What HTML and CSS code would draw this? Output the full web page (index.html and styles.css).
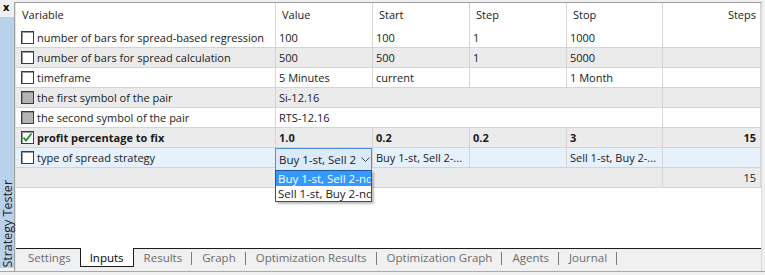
FILE: index.html
```html
<!DOCTYPE html>
<html lang="en">
<head>
  <meta charset="UTF-8" />
  <meta name="viewport" content="width=device-width, initial-scale=1.0" />
  <title>Strategy Tester - Inputs</title>
  <link rel="stylesheet" href="styles.css">
</head>
<body>
  <div class="window">
    <div class="frame">
      <!-- docked panel caption, reads bottom to top -->
      <div class="side">
        <span class="close">x</span>
        <div class="caption"><span>Strategy Tester</span></div>
      </div>

      <div class="panel">
        <!-- inputs table -->
        <div class="grid">
          <div class="row head">
            <div class="cell">Variable</div>
            <div class="cell">Value</div>
            <div class="cell">Start</div>
            <div class="cell">Step</div>
            <div class="cell">Stop</div>
            <div class="cell right">Steps</div>
          </div>

          <div class="row">
            <div class="cell name"><span class="check"></span>number of bars for spread-based regression</div>
            <div class="cell">100</div>
            <div class="cell">100</div>
            <div class="cell">1</div>
            <div class="cell">1000</div>
            <div class="cell right"></div>
          </div>

          <div class="row alt">
            <div class="cell name"><span class="check"></span>number of bars for spread calculation</div>
            <div class="cell">500</div>
            <div class="cell">500</div>
            <div class="cell">1</div>
            <div class="cell">5000</div>
            <div class="cell right"></div>
          </div>

          <div class="row">
            <div class="cell name"><span class="check"></span>timeframe</div>
            <div class="cell">5 Minutes</div>
            <div class="cell">current</div>
            <div class="cell"></div>
            <div class="cell">1 Month</div>
            <div class="cell right"></div>
          </div>

          <div class="row alt">
            <div class="cell name"><span class="check off"></span>the first symbol of the pair</div>
            <div class="cell wide">Si-12.16</div>
            <div class="cell right"></div>
          </div>

          <div class="row">
            <div class="cell name"><span class="check off"></span>the second symbol of the pair</div>
            <div class="cell wide">RTS-12.16</div>
            <div class="cell right"></div>
          </div>

          <div class="row alt bold">
            <div class="cell name">
              <span class="check">
                <svg width="11" height="11" viewBox="0 0 11 11"><polyline points="1.5,5.5 4,8.5 9.5,1.5" fill="none" stroke="#189a18" stroke-width="1.8"/></svg>
              </span>profit percentage to fix
            </div>
            <div class="cell">1.0</div>
            <div class="cell">0.2</div>
            <div class="cell">0.2</div>
            <div class="cell">3</div>
            <div class="cell right">15</div>
          </div>

          <div class="row selected">
            <div class="cell name"><span class="check"></span>type of spread strategy</div>
            <div class="cell open">
              <!-- combo box in edit mode, list dropped down -->
              <div class="combo">
                <span>Buy 1-st, Sell 2-nd</span>
                <svg width="9" height="6" viewBox="0 0 9 6"><polyline points="0.5,0.5 4.5,4.5 8.5,0.5" fill="none" stroke="#444" stroke-width="1"/></svg>
              </div>
              <ul class="dropdown">
                <li class="active">Buy 1-st, Sell 2-nd</li>
                <li>Sell 1-st, Buy 2-nd</li>
              </ul>
            </div>
            <div class="cell">Buy 1-st, Sell 2-...</div>
            <div class="cell"></div>
            <div class="cell">Sell 1-st, Buy 2-...</div>
            <div class="cell right"></div>
          </div>

          <div class="row alt">
            <div class="cell name"></div>
            <div class="cell wide"></div>
            <div class="cell right">15</div>
          </div>
        </div>

        <!-- bottom tabs -->
        <div class="tabs">
          <span class="tab first">Settings</span>
          <span class="tab current">Inputs</span>
          <span class="tab">Results</span><span class="sep"></span>
          <span class="tab">Graph</span><span class="sep"></span>
          <span class="tab">Optimization Results</span><span class="sep"></span>
          <span class="tab">Optimization Graph</span><span class="sep"></span>
          <span class="tab">Agents</span><span class="sep"></span>
          <span class="tab">Journal</span><span class="sep"></span>
        </div>
      </div>
    </div>
    <div class="bottom"></div>
  </div>
</body>
</html>
```

FILE: styles.css
```css
body {
  margin: 0;
  background-color: #f0f0f0;
  font-family: 'Open Sans', 'Liberation Sans', sans-serif;
  font-size: 11px;
  color: #1a1a1a;
}

.window {
  width: 765px;
  height: 275px;
  display: flex;
  flex-direction: column;
}

.frame {
  height: 271px;
  display: flex;
}

.bottom {
  flex: 1;
  border-top: 1px solid #a9a9a9;
}

/* side caption */
.side {
  width: 14px;
  display: flex;
  flex-direction: column;
}

.close {
  height: 17px;
  padding-left: 3px;
  font-weight: bold;
  font-size: 11px;
  line-height: 14px;
  color: #000;
}

.caption {
  flex: 1;
  margin-bottom: 3px;
  background-color: #b9d1ea;
  display: flex;
  align-items: flex-end;
  justify-content: center;
}

.caption span {
  writing-mode: vertical-rl;
  transform: rotate(180deg);
  line-height: 13px;
  font-size: 12.5px;
  color: #222;
}

/* panel */
.panel {
  flex: 1;
  margin-top: 2px;
  margin-right: 3px;
  border-top: 1px solid #a0a0a0;
  border-left: 1px solid #a0a0a0;
  border-right: 1px solid #dcdcdc;
  padding-left: 1px;
  background-color: #e4e4e4;
  display: flex;
  flex-direction: column;
}

.grid {
  flex: 1;
  background-color: #fff;
}

.row {
  display: grid;
  grid-template-columns: 260px 97px 97px 97px 96px 98px;
  height: 20px;
  border-bottom: 1px solid #d4d4d4;
  box-sizing: border-box;
}

.row.head {
  height: 25px;
  border-bottom: none;
}

.row.alt {
  background-color: #ebebeb;
}

.row.selected {
  background-color: #e6f1fc;
}

.row.bold {
  font-weight: bold;
}

.cell {
  border-right: 1px solid #d4d4d4;
  padding: 0 4px 0 3px;
  line-height: 19px;
  white-space: nowrap;
  overflow: hidden;
}

.head .cell {
  line-height: 24px;
  padding-left: 6px;
}

.cell.right {
  text-align: right;
}

.cell.wide {
  grid-column: span 4;
}

.cell.name {
  display: flex;
  align-items: center;
  padding-left: 5px;
}

/* checkboxes */
.check {
  width: 13px;
  height: 13px;
  box-sizing: border-box;
  border: 1px solid #3c3c3c;
  box-shadow: inset 1px 1px 0 #9a9a9a;
  background-color: #fff;
  margin-right: 3px;
  flex-shrink: 0;
  display: flex;
  align-items: center;
  justify-content: center;
}

.check.off {
  background-color: #b4b4b4;
  box-shadow: inset 1px 1px 0 #8a8a8a;
}

.check svg {
  display: block;
}

/* combo box */
.cell.open {
  position: relative;
  overflow: visible;
  z-index: 2;
}

.combo {
  position: absolute;
  top: 0;
  left: -1px;
  width: 97px;
  height: 23px;
  box-sizing: border-box;
  border: 1px solid #4f8fd6;
  background-color: #dcebfc;
  display: flex;
  align-items: center;
  padding-left: 3px;
}

.combo span {
  width: 77px;
  overflow: hidden;
  white-space: nowrap;
  font-size: 11.5px;
}

.combo svg {
  margin-left: 5px;
}

.dropdown {
  position: absolute;
  top: 22px;
  left: -1px;
  width: 97px;
  margin: 0;
  padding: 0;
  list-style-type: none;
  box-sizing: border-box;
  border: 1px solid #24579a;
  background-color: #fff;
  box-shadow: 2px 2px 2px rgba(0, 0, 0, 0.25);
}

.dropdown li {
  height: 15px;
  line-height: 15px;
  padding-left: 2px;
  white-space: nowrap;
  overflow: hidden;
  font-size: 11.5px;
}

.dropdown li.active {
  background-color: #3399ff;
  color: #fff;
}

/* tabs */
.tabs {
  height: 22px;
  border-top: 1px solid #1a1a1a;
  background-color: #f0f0f0;
  display: flex;
  align-items: flex-start;
  color: #6d6d6d;
  font-size: 11.5px;
}

.tab {
  padding: 0 9px 0 10px;
  line-height: 18px;
}

.tab.first {
  padding-left: 12px;
}

.tab.current {
  margin-top: -1px;
  height: 18px;
  border: 1px solid #1a1a1a;
  border-top: none;
  background-color: #fff;
  color: #000;
  padding: 0 9px;
  line-height: 19px;
}

.sep {
  width: 1px;
  height: 13px;
  margin-top: 3px;
  background-color: #7a7a7a;
}
```
